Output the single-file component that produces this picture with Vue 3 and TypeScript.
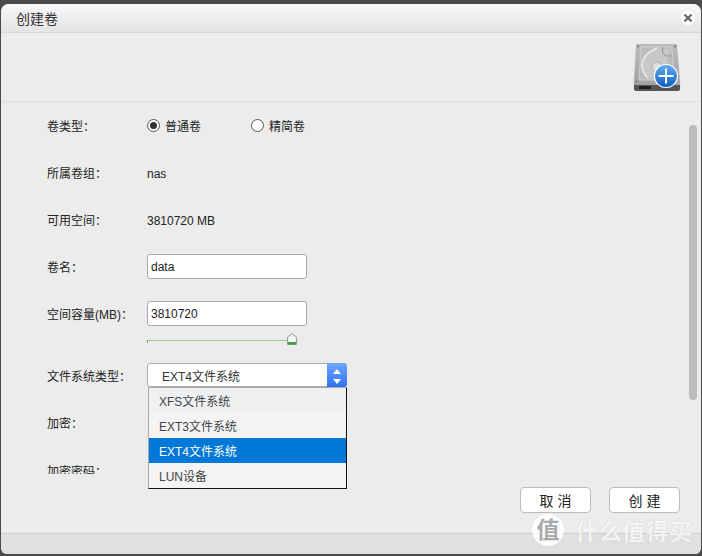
<template>
  <div class="backdrop">
    <div class="dialog">
      <header class="titlebar">
        <span class="title">创建卷</span>
        <button class="close" aria-label="关闭">
          <svg width="10" height="10" viewBox="0 0 10 10">
            <path d="M2.2 2.2 L7.8 7.8 M7.8 2.2 L2.2 7.8" stroke="#666" stroke-width="2.2" stroke-linecap="square" />
          </svg>
        </button>
      </header>

      <div class="banner">
        <svg class="disk" width="48" height="48" viewBox="0 0 48 48">
          <defs>
            <linearGradient id="diskBody" x1="0" y1="0" x2="0" y2="1">
              <stop offset="0" stop-color="#bdbdbd" />
              <stop offset="1" stop-color="#a2a2a2" />
            </linearGradient>
            <linearGradient id="diskPlus" x1="0" y1="0" x2="0" y2="1">
              <stop offset="0" stop-color="#62aef2" />
              <stop offset="1" stop-color="#0d5cc0" />
            </linearGradient>
          </defs>
          <path d="M3.5 0.5 H43.5 L47 41 H1 Z" fill="url(#diskBody)" stroke="#a5a5a5" stroke-width="0.6" />
          <path d="M1 41 H47 V45 Q47 47 45 47 H3 Q1 47 1 45 Z" fill="#555" />
          <path d="M8 3 H37 Q39 3 39 5 L41 36 H6 L8 5 Q8 3 10 3 Z" fill="#bcbcbc" stroke="#d6d6d6" stroke-width="0.8" />
          <path d="M24 4 Q10 10 9 20 Q9 29 15 34 H31 L37 5 Z" fill="#c8c8c8" />
          <path d="M24 4 Q10 10 9 20 Q9 29 15 34" fill="none" stroke="#ececec" stroke-width="1.6" />
          <path d="M30 3 Q28 10 33 12 L39 12" fill="none" stroke="#949494" stroke-width="1" />
          <circle cx="24" cy="23" r="5" fill="#dedede" stroke="#9c9c9c" stroke-width="0.7" />
          <circle cx="5" cy="2.5" r="1" fill="#6a6a6a" />
          <circle cx="42" cy="2.5" r="1" fill="#6a6a6a" />
          <circle cx="3.5" cy="37.5" r="1" fill="#6a6a6a" />
          <rect x="6" y="42" width="12" height="3" fill="#1e1e1e" />
          <circle cx="33" cy="32" r="11.5" fill="url(#diskPlus)" stroke="#fff" stroke-width="1.2" />
          <path d="M33 24.5 V39.5 M25.5 32 H40.5" stroke="#fff" stroke-width="2" />
        </svg>
      </div>

      <div class="content">
        <form class="form">
          <div class="row">
            <label>卷类型：</label>
            <div class="radios">
              <span class="radio"><i class="dot on"></i>普通卷</span>
              <span class="radio"><i class="dot"></i>精简卷</span>
            </div>
          </div>
          <div class="row"><label>所属卷组：</label><span class="value">nas</span></div>
          <div class="row"><label>可用空间：</label><span class="value">3810720 MB</span></div>
          <div class="row">
            <label>卷名：</label>
            <div class="input">data</div>
          </div>
          <div class="row">
            <label>空间容量(MB)：</label>
            <div class="input">3810720</div>
          </div>
          <div class="slider">
            <div class="track"></div>
            <svg class="thumb" width="10" height="12" viewBox="0 0 10 12">
              <path d="M5 .6 L9.4 4 V11.4 H.6 V4 Z" fill="#f1f5ef" stroke="#9a9a9a" stroke-width="1" />
              <path d="M.6 9 H9.4 V11.6 H.6 Z" fill="#3f9a4c" />
            </svg>
          </div>
          <div class="row">
            <label>文件系统类型：</label>
            <div class="select">
              <span class="select-text">EXT4文件系统</span>
              <span class="select-arrows">
                <svg width="10" height="19" viewBox="0 0 10 19">
                  <path d="M5 3 L9 8 H1 Z M5 18 L1 13 H9 Z" fill="#fff" />
                </svg>
              </span>
              <ul class="menu">
                <li
                  v-for="opt in options"
                  :key="opt"
                  :class="{ hover: opt === 'XFS文件系统', active: opt === selected }"
                >{{ opt }}</li>
              </ul>
            </div>
          </div>
          <div class="row"><label>加密：</label></div>
          <div class="row cut"><label>加密密码：</label></div>
        </form>
        <div class="scrollbar"><div class="scroll-thumb"></div></div>
      </div>

      <div class="actions">
        <button class="btn">取 消</button>
        <button class="btn">创 建</button>
      </div>
      <div class="statusbar"></div>

      <div class="watermark">
        <span class="wm-badge">值</span>
        <span class="wm-text">什么值得买</span>
      </div>
    </div>
  </div>
</template>

<script setup lang="ts">
const selected = 'EXT4文件系统'
const options: string[] = ['XFS文件系统', 'EXT3文件系统', 'EXT4文件系统', 'LUN设备']
</script>

<style>
html, body {
  margin: 0;
  background: #4a4a4a;
}
</style>

<style scoped>
.backdrop {
  width: 702px;
  height: 556px;
  box-sizing: border-box;
  padding: 4px 1px 2px 1px;
  background: #4a4a4a;
  overflow: hidden;
  font-family: "Liberation Sans", "Noto Sans CJK SC", sans-serif;
  font-size: 12px;
  color: #222;
}

.dialog {
  position: relative;
  height: 100%;
  display: flex;
  flex-direction: column;
  background: #ececec;
  border-radius: 8px 8px 6px 6px;
  overflow: hidden;
}

.titlebar {
  height: 28px;
  flex: none;
  display: flex;
  align-items: center;
  justify-content: space-between;
  padding: 0 6px 0 15px;
  background: linear-gradient(#f8f8f8, #e4e4e4);
  border-bottom: 1px solid #d8d8d8;
}

.title {
  font-size: 14px;
  color: #333;
}

.close {
  width: 14px;
  height: 14px;
  margin-top: -1px;
  padding: 0;
  border: 0;
  border-radius: 50%;
  background: #fff;
  display: flex;
  align-items: center;
  justify-content: center;
}

.banner {
  height: 69px;
  flex: none;
  display: flex;
  justify-content: flex-end;
  align-items: flex-start;
  padding: 11px 20px 0 0;
  box-sizing: border-box;
  border-bottom: 1px solid #e0e0e0;
}

.content {
  position: relative;
  height: 373px;
  flex: none;
}

.form {
  padding-left: 46px;
}

.row {
  height: 47px;
  display: flex;
  align-items: center;
}

.row.cut {
  height: 28px;
  box-sizing: border-box;
  padding-top: 18px;
  align-items: flex-start;
  line-height: 17px;
  overflow: hidden;
}

.row label {
  width: 100px;
  flex: none;
}

.value {
  padding-top: 2px;
}

.radios {
  display: flex;
  gap: 50px;
}

.radio {
  display: flex;
  align-items: center;
  gap: 5px;
}

.dot {
  width: 11px;
  height: 11px;
  border: 1px solid #555;
  border-radius: 50%;
  background: #fff;
  display: flex;
  align-items: center;
  justify-content: center;
}

.dot.on::after {
  content: "";
  width: 7px;
  height: 7px;
  border-radius: 50%;
  background: #333;
}

.input {
  width: 155px;
  height: 23px;
  padding-left: 3px;
  border: 1px solid #aaa;
  border-radius: 3px;
  background: #fff;
  line-height: 24px;
}

.slider {
  position: relative;
  height: 15px;
  width: 151px;
  margin-left: 100px;
}

.track {
  position: absolute;
  left: 0;
  right: 0;
  top: 3px;
  height: 1px;
  background: #8ed58e;
  box-shadow: 0 1px 0 #efeee2;
}

.track::before {
  content: "";
  position: absolute;
  left: 0;
  top: 0;
  width: 1px;
  height: 3px;
  background: #888;
}

.thumb {
  position: absolute;
  right: 1px;
  top: -4px;
}

.select {
  position: relative;
  width: 198px;
  height: 22px;
  margin-bottom: 1px;
  border: 1px solid #aaa;
  border-radius: 3px;
  background: #fff;
  display: flex;
  align-items: center;
  justify-content: space-between;
}

.select-text {
  padding-left: 14px;
  color: #333;
}

.select-arrows {
  width: 20px;
  height: 24px;
  margin-right: -1px;
  border-radius: 0 3px 3px 0;
  background: linear-gradient(#6ea6ff, #2f72f6);
  display: flex;
  align-items: center;
  justify-content: center;
}

.menu {
  position: absolute;
  left: 0;
  top: 23px;
  width: 197px;
  margin: 0;
  padding: 0;
  list-style: none;
  background: #f4f4f4;
  border: 1px solid #111;
  border-left-color: #aaa;
  border-top-color: #aaa;
  z-index: 2;
}

.menu li {
  height: 25px;
  line-height: 28px;
  padding-left: 10px;
  color: #444;
}

.menu li.hover {
  background: #eff0f2;
}

.menu li.active {
  background: #0078d7;
  color: #fff;
}

.scrollbar {
  position: absolute;
  right: 4px;
  top: 23px;
  width: 8px;
  height: 275px;
}

.scroll-thumb {
  height: 100%;
  border-radius: 4px;
  background: #bcbcbc;
}

.actions {
  flex: 1;
  display: flex;
  justify-content: flex-end;
  align-items: flex-start;
  gap: 18px;
  padding: 12px 21px 0 0;
}

.btn {
  width: 71px;
  height: 26px;
  padding: 0;
  border: 1px solid #bbb;
  border-radius: 4px;
  background: #fff;
  font: inherit;
  font-size: 14px;
  color: #222;
}

.statusbar {
  height: 20px;
  flex: none;
  background: #e0e0e0;
  border-top: 1px solid #cfcfcf;
}

.watermark {
  position: absolute;
  left: 531px;
  top: 509px;
  display: flex;
  align-items: center;
  gap: 11px;
  color: rgba(255, 255, 255, 0.85);
  pointer-events: none;
}

.wm-badge {
  width: 32px;
  height: 32px;
  border-radius: 50%;
  background: rgba(255, 255, 255, 0.88);
  color: #aaa;
  font-size: 23px;
  font-weight: 700;
  line-height: 32px;
  text-align: center;
}

.wm-text {
  font-size: 23px;
  font-weight: 700;
  letter-spacing: 0.5px;
  text-shadow: 0 0 1px rgba(120, 120, 120, 0.4);
}
</style>
